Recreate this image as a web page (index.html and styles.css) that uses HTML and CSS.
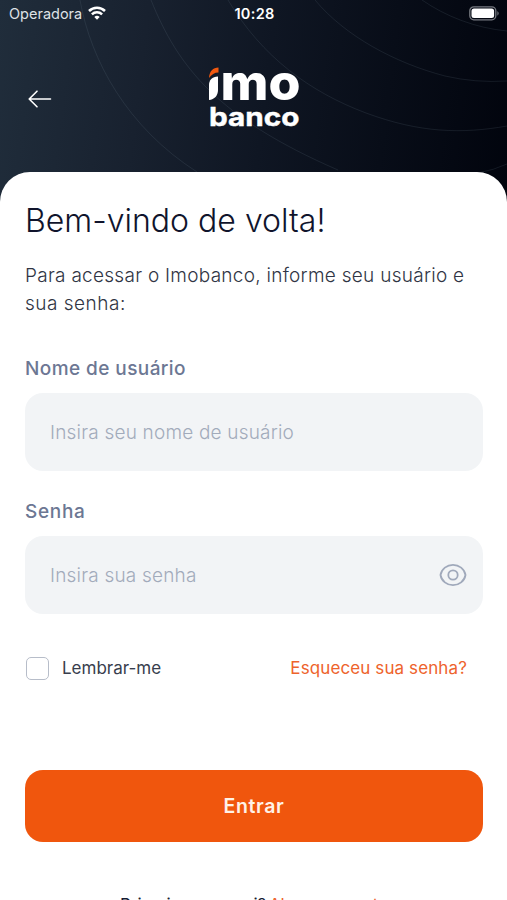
FILE: index.html
```html
<!DOCTYPE html>
<html lang="pt-BR">
<head>
<meta charset="utf-8">
<meta name="viewport" content="width=device-width">
<title>Imobanco</title>
<link rel="stylesheet" href="styles.css">
</head>
<body>
<header class="hero">
  <svg class="rings" viewBox="0 0 507 210" aria-hidden="true">
    <path d="M80 0C91 61 127 127 197 172"/>
    <path d="M151 0C178 67 218 118 338 170"/>
    <path d="M228 0C262 57 310 92 366 113C420 133 462 134 507 126"/>
    <path d="M315 0C345 36 395 63 445 76Q475 83 507 81"/>
    <path d="M422 0C445 16 475 28 507 31"/>
    <path d="M478 173Q494 170 507 164"/>
  </svg>
  <div class="status">
    <div class="carrier"><span>Operadora</span>
      <svg class="wifi" viewBox="0 0 18 14" aria-hidden="true"><path d="M1 5a11.400 11.400 0 0 1 16 0M3.900 8.300a7.300 7.300 0 0 1 10.200 0" /><path class="solid" d="M9 13.800l-2.700-2.700a3.900 3.900 0 0 1 5.400 0z"/></svg>
    </div>
    <time>10:28</time>
    <svg class="battery" viewBox="0 0 31 15" aria-hidden="true"><rect class="case" x=".8" y=".8" width="26" height="13" rx="4"/><rect class="charge" x="2.500" y="2.500" width="22.600" height="9.600" rx="2.500"/><path class="tip" d="M28.400 5q2.600 2.300 0 4.700z"/></svg>
  </div>
  <div class="brandbar">
    <svg class="back" viewBox="0 0 24 18" aria-label="Voltar"><path d="M22.500 9H1.500M9 1.200L1.200 9 9 16.800"/></svg>
    <svg class="logo" viewBox="0 0 94 64" aria-label="imo banco">
      <path class="flame" d="M2 12C2.500 5 6 1.500 11.500 1.500V6.500C7.500 6.500 4.500 8.500 2 12Z"/>
      <path class="stem" d="M2 34V19C2 14 5 11 11 10.500V24C11 29.500 7.500 33.500 2 34Z"/>
      <text class="word-top" x="13.500" y="33.800" textLength="80" lengthAdjust="spacingAndGlyphs">mo</text>
      <text class="word-bottom" x="2" y="59.500" textLength="90.500" lengthAdjust="spacingAndGlyphs">banco</text>
    </svg>
  </div>
</header>
<main class="sheet">
  <h1>Bem-vindo de volta!</h1>
  <p class="intro"><span class="line1">Para acessar o Imobanco, informe seu usuário e</span> <span class="line2">sua senha:</span></p>
  <label class="label user-label">Nome de usuário</label>
  <div class="field"><span>Insira seu nome de usuário</span></div>
  <label class="label pass-label">Senha</label>
  <div class="field"><span>Insira sua senha</span>
    <svg class="eye" viewBox="0 0 28 24" aria-hidden="true"><path d="M1.500 12C2.500 6 8 1.800 14 1.800S25.500 6 26.500 12C25.500 18 20 22.200 14 22.200S2.500 18 1.500 12Z"/><circle cx="14" cy="12" r="4.700"/></svg>
  </div>
  <div class="options">
    <div class="remember"><span class="box"></span><span>Lembrar-me</span></div>
    <a class="forgot">Esqueceu sua senha?</a>
  </div>
  <button class="submit">Entrar</button>
  <p class="signup"><span>Primeiro por aqui?</span> <a>Abra sua conta</a></p>
</main>
</body>
</html>
```
FILE: styles.css
```css
* { box-sizing: border-box; }
html, body { margin: 0; height: 900px; overflow: hidden; }
body { font-family: Inter, sans-serif; color: #171c33; background: #fff; font-weight: 300; }
.hero { height: 210px; position: relative; background: linear-gradient(97deg, #202d3b 0%, #18212f 28%, #0f1623 52%, #080d18 75%, #01040d 100%); }
.rings { position: absolute; inset: 0; width: 507px; height: 210px; fill: none; stroke: #8292a6; stroke-opacity: .14; stroke-width: 1; }
.status { position: relative; display: grid; grid-template-columns: 1fr auto 1fr; align-items: center; height: 27px; padding: 0 7px 0 9px; color: #fff; font-size: 14.5px; font-weight: 400; }
.carrier { display: flex; align-items: center; gap: 6px; color: #dfe2e6; }
.status time { font-weight: 600; letter-spacing: .3px; }
.wifi { width: 18px; height: 14px; margin-top: -1px; fill: none; stroke: #fff; stroke-width: 2.5; }
.wifi .solid { fill: #fff; stroke: none; }
.battery { width: 31px; height: 15px; margin-top: -1px; justify-self: end; }
.case { fill: none; stroke: #777a81; stroke-width: 1.3; }
.charge { fill: #fff; }
.tip { fill: #777a81; }
.brandbar { position: relative; display: grid; grid-template-columns: 1fr 94px 1fr; padding: 39px 27px 0 28px; }
.back { width: 24px; height: 18px; margin-top: 24px; fill: none; stroke: #fff; stroke-width: 1.6; stroke-linecap: round; stroke-linejoin: round; }
.logo { width: 94px; height: 64px; fill: #fff; font-family: Inter, sans-serif; font-weight: 800; }
.word-top { font-size: 49px; }
.word-bottom { font-size: 25.5px; font-weight: 700; stroke: #fff; stroke-width: .4; }
.flame { fill: #f0580f; }
.sheet { position: relative; margin-top: -38px; height: 728px; background: #fff; border-radius: 30px 30px 0 0; padding: 29px 24px 0 25px; }
h1 { margin: 0; font-size: 32px; line-height: 40px; font-weight: 300; color: #10142c; white-space: nowrap; }
.intro { margin: 21px 0 0; font-size: 19px; line-height: 28px; letter-spacing: .28px; color: #303544; white-space: nowrap; }
.intro span { display: block; }
.line2 { letter-spacing: .5px; }
.label { display: block; font-size: 19px; line-height: 26px; letter-spacing: .42px; font-weight: 500; color: #6c7793; }
.user-label { margin-top: 38px; }
.pass-label { margin-top: 27px; }
.field { display: flex; align-items: center; justify-content: space-between; height: 78px; margin-top: 11px; padding: 0 16px 0 25px; border-radius: 18px; background: #f2f4f6; color: #a2abbb; font-size: 19px; letter-spacing: .2px; }
.field + .pass-label { margin-top: 28px; letter-spacing: .7px; }
.eye { width: 28px; height: 24px; fill: none; stroke: #a0a9bb; stroke-width: 1.8; }
.options { display: flex; justify-content: space-between; align-items: center; height: 24px; margin-top: 42px; padding-right: 16px; font-size: 17px; font-weight: 400; }
.remember { display: flex; align-items: center; gap: 13px; padding-left: 1px; color: #383e4d; }
.box { width: 23px; height: 23px; border: 1.5px solid #b7bdc9; border-radius: 5px; }
.forgot, .signup a { color: #ee632c; }
.forgot { letter-spacing: .11px; }
.submit { display: block; width: 100%; height: 72px; margin-top: 90px; padding: 0; border: 0; border-radius: 18px; background: #f0560d; color: #fff2e7; font: 600 19.5px Inter, sans-serif; letter-spacing: .65px; }
.signup { margin: 52px 0 0; font-size: 17px; line-height: 22px; font-weight: 400; white-space: nowrap; padding-left: 95px; }
.signup a { margin-left: -2px; letter-spacing: -.2px; }
```
